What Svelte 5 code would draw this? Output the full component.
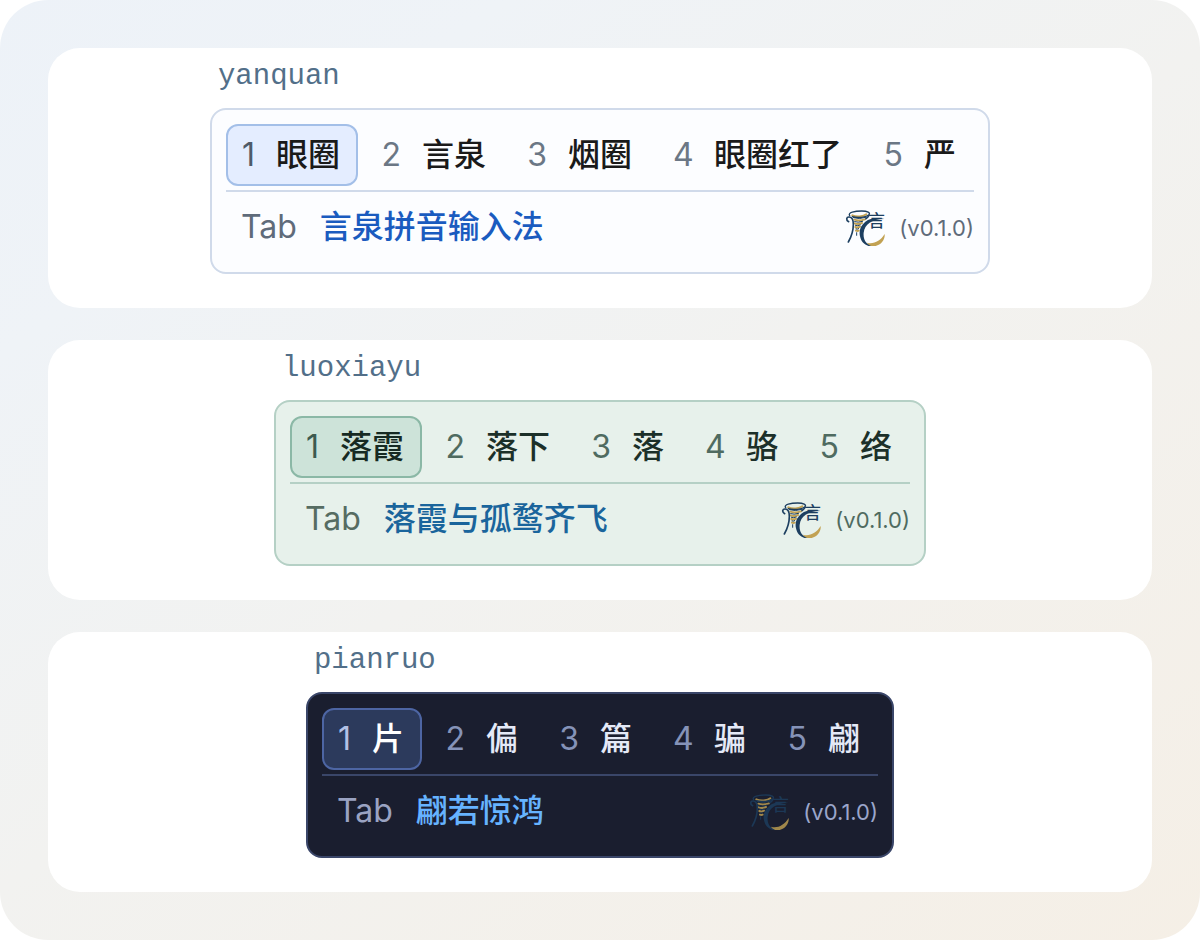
<script lang="ts">
  type Preview = {
    theme: string;
    pinyin: string;
    candidates: string[];
    phrase: string;
  };

  const version = "(v0.1.0)";

  const previews: Preview[] = [
    {
      theme: "light",
      pinyin: "yanquan",
      candidates: ["眼圈", "言泉", "烟圈", "眼圈红了", "严"],
      phrase: "言泉拼音输入法",
    },
    {
      theme: "green",
      pinyin: "luoxiayu",
      candidates: ["落霞", "落下", "落", "骆", "络"],
      phrase: "落霞与孤鹜齐飞",
    },
    {
      theme: "dark",
      pinyin: "pianruo",
      candidates: ["片", "偏", "篇", "骗", "翩"],
      phrase: "翩若惊鸿",
    },
  ];

  let selected = $state([0, 0, 0]);
</script>

{#snippet logo()}
  <svg class="logo" viewBox="8 8 120 114" aria-hidden="true">
    <g fill="none" stroke-linecap="round">
      <path class="gold" d="M30 30c12 6 34 4 42-3M36 43q14 5 32-1M37 54q10 4 22-1M39 65q7 3 14-1M41 76q4 2 8 0" stroke-width="6" />
      <path class="ink" d="M22 31C15 22 38 17 58 17c18 0 27 5 22 11-7 8-36 11-50 6" stroke-width="4" />
      <path class="ink" d="M19 49c-9-5-7-15 2-14 9 1 12 10 12 22 0 20-5 36-15 53" stroke-width="5" />
      <path class="ink" d="M33 37q18 6 38-1M37 49q10 4 24-1M39 60q7 3 15-1M41 71q5 2 8-1M43 82v8" stroke-width="3" />
      <path class="ink" d="M80 30c-3 5-5 7-9 10" stroke-width="5" />
    </g>
    <path class="gold-fill" d="M74 112c18 6 40-4 53-26 2 22-17 38-37 37-8-1-13-4-16-11z" />
    <path class="ink-fill" d="M126 41c-19-6-42-4-57 8-14 11-20 27-16 44 4 19 17 30 38 31-20-7-29-21-27-42 3-25 24-40 62-41z" />
    <text class="ink-fill" x="78" y="65" font-size="50" font-weight="500">言</text>
  </svg>
{/snippet}

<main>
  {#each previews as preview, p}
    <section class="card {preview.theme}">
      <div class="ime">
        <div class="pinyin">{preview.pinyin}</div>
        <div class="panel">
          <div class="candidates">
            {#each preview.candidates as word, i}
              <button
                class="candidate"
                class:selected={selected[p] === i}
                onclick={() => (selected[p] = i)}
              >
                <span class="index">{i + 1}</span>
                <span class="word">{word}</span>
              </button>
            {/each}
          </div>
          <div class="footer">
            <span class="key">Tab</span>
            <span class="phrase">{preview.phrase}</span>
            {@render logo()}
            <span class="version">{version}</span>
          </div>
        </div>
      </div>
    </section>
  {/each}
</main>

<style>
  :global(body) {
    background: white;
  }

  main {
    box-sizing: border-box;
    min-height: 100vh;
    padding: 48px;
    display: flex;
    flex-direction: column;
    gap: 32px;
    border-radius: 48px;
    background: linear-gradient(145deg, #edf2f8 0%, #eff3f7 20%, #f2f2f0 50%, #f5efe6 100%);
    font-family: Inter, "Noto Sans CJK SC", sans-serif;
  }

  .card {
    display: flex;
    justify-content: center;
    padding-bottom: 34px;
    border-radius: 32px;
    background: white;
  }

  .pinyin {
    padding-left: 8px;
    margin-bottom: 2px;
    font-family: "Liberation Mono", monospace;
    font-size: 29px;
    line-height: 58px;
    color: #526f89;
  }

  .panel {
    padding: 14px;
    border: 2px solid var(--line);
    border-radius: 16px;
    background: var(--bg);
  }

  .candidates {
    display: flex;
    gap: 14px;
    padding-bottom: 4px;
    border-bottom: 2px solid var(--line);
  }

  .candidate {
    display: flex;
    align-items: center;
    gap: 21px;
    height: 62px;
    padding: 0 16px 0 7px;
    border: 2px solid transparent;
    border-radius: 12px;
    background: none;
    font-family: inherit;
    font-size: 32px;
    line-height: 48px;
    color: var(--text);
    white-space: nowrap;
    cursor: pointer;
  }

  .candidate.selected {
    border-color: var(--active-line);
    background: var(--active-bg);
    color: var(--active-text);
  }

  .index {
    width: 20px;
    text-align: right;
    color: var(--muted);
  }

  .selected .index {
    color: var(--active-muted);
  }

  .word,
  .phrase {
    font-weight: 500;
  }

  .footer {
    display: flex;
    align-items: center;
    padding: 12px 0 8px 15px;
    font-size: 32px;
    line-height: 46px;
    white-space: nowrap;
  }

  .key {
    margin-right: 23px;
    color: var(--key);
  }

  .phrase {
    margin-right: auto;
    color: var(--accent);
  }

  .logo {
    width: 40px;
    height: 38px;
    margin-right: 14px;
    opacity: var(--logo-opacity);
  }

  .ink {
    stroke: #1d3f60;
  }

  .ink-fill {
    fill: #1d3f60;
  }

  .gold {
    stroke: #c2a253;
  }

  .gold-fill {
    fill: #c2a253;
  }

  .version {
    padding-top: 2px;
    font-size: 22px;
    line-height: 44px;
    color: var(--version);
  }

  .light {
    --bg: #fcfdff;
    --line: #d0daea;
    --text: #1a1a1a;
    --muted: #6b7785;
    --active-bg: #e4edff;
    --active-line: #a3bfe8;
    --active-text: #1a1a1a;
    --active-muted: #4f5b69;
    --key: #5f6b7a;
    --accent: #1a5bbf;
    --version: #5f6b7a;
    --logo-opacity: 1;
  }

  .green {
    --bg: #e7f1eb;
    --line: #b5d0c5;
    --text: #1c3029;
    --muted: #4f6b60;
    --active-bg: #cde3d9;
    --active-line: #8bb8a6;
    --active-text: #162a23;
    --active-muted: #3d5a4f;
    --key: #566c62;
    --accent: #1a659c;
    --version: #4f6b60;
    --logo-opacity: 1;
  }

  .dark {
    --bg: #1a1e2f;
    --line: #3a4669;
    --text: #e4e9f7;
    --muted: #8593b8;
    --active-bg: #2c3a5c;
    --active-line: #4d65a3;
    --active-text: #ffffff;
    --active-muted: #b3c1e6;
    --key: #9aa3c2;
    --accent: #66b3ff;
    --version: #9ba6cb;
    --logo-opacity: 0.8;
  }
</style>
